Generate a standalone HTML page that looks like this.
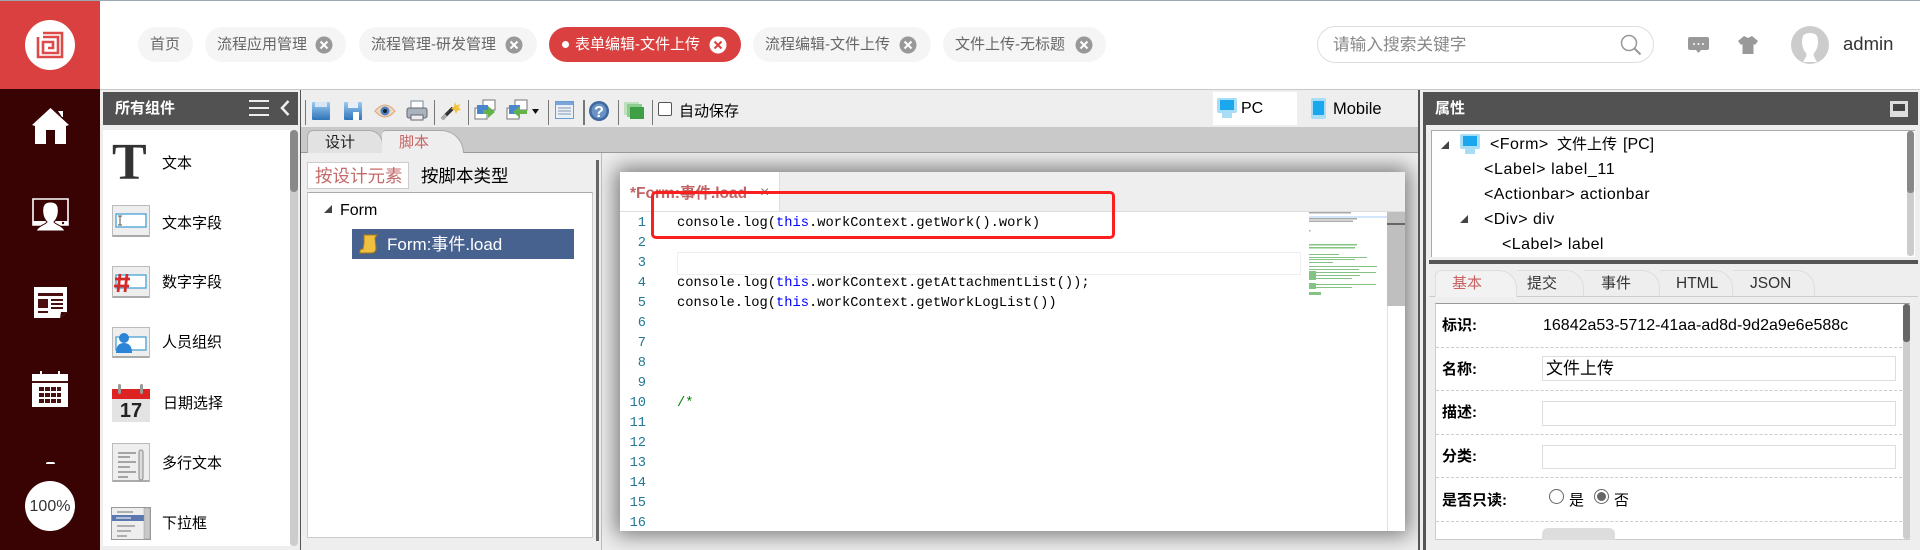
<!DOCTYPE html>
<html><head><meta charset="utf-8">
<style>
*{box-sizing:border-box}
html,body{margin:0;padding:0;width:1920px;height:550px;overflow:hidden;background:#fff}
body{position:relative;font-family:"Liberation Sans","Noto Sans CJK SC",sans-serif;color:#000}
.a{position:absolute}
.t{position:absolute;white-space:nowrap;line-height:20px;height:20px}
.tab{position:absolute;top:27px;height:35px;border-radius:18px;background:#f5f5f5}
.tt{color:#666;font-size:15px}
.c{font-family:"Liberation Mono",monospace;font-size:13.75px;letter-spacing:0}
.n{position:absolute;left:625px;width:21px;text-align:right;font-family:"Liberation Mono",monospace;font-size:13.7px;color:#237893;line-height:20px}
.k{color:#0000ff}
.l{font-size:15px}
svg{position:absolute;overflow:visible}
.ds{position:absolute;left:1436px;width:466px;border-top:1px dashed #ccc;height:0}
.in{position:absolute;left:1542px;width:354px;border:1px solid #ddd;background:#fff}
.pt{position:absolute;top:270px;height:26px;border:1px solid #ddd;border-bottom:none;border-left:none;border-radius:0 18px 0 0;background:#eee}
.sep{position:absolute;top:100px;height:25px;width:1px;background:#777}
.tr{font-size:16px;letter-spacing:.45px}
</style></head><body>

<div class="a" style="left:0;top:0;width:1920px;height:1px;background:#9aabb0"></div>
<div class="a" style="left:100px;top:89px;width:1820px;height:1px;background:#c8c8c8"></div>
<div class="a" style="left:100px;top:90px;width:1820px;height:460px;background:#eee"></div>

<!-- logo -->
<div class="a" style="left:0;top:1px;width:100px;height:88px;background:#db4040"></div>
<div class="a" style="left:25px;top:20px;width:50px;height:50px;border-radius:50%;background:#fff"></div>
<svg style="left:35px;top:31px" width="30" height="28" viewBox="0 0 30 28" fill="none" stroke="#dd4a4a" stroke-width="2.600">
<path d="M3 6V26H27V2H8"/><path d="M8 6H23V22H8V11H18V17H13"/></svg>

<!-- sidebar -->
<div class="a" style="left:0;top:89px;width:100px;height:461px;background:#3a0303"></div>
<svg style="left:32px;top:108px" width="37" height="36" viewBox="0 0 37 36" fill="#fff"><path d="M18.500 0 37 17 34 18V36H23V22H14V36H3V18L0 17Z"/><path d="M26 3h5v6h-1z"/></svg>
<svg style="left:32px;top:198px" width="37" height="33" viewBox="0 0 37 33"><path d="M1 1H36V27H1Z" fill="#3a0303" stroke="#fff" stroke-width="1.600"/><path d="M1 23H36V27H1Z" fill="#fff"/><path d="M4 33C7 27 13 27 15 24 11 20 10 14 11 9 12 5 15 4 18.500 4 22 4 25 5 26 9 27 14 26 20 22 24 24 27 30 27 33 33Z" fill="#fff" stroke="#3a0303" stroke-width="1"/><circle cx="31" cy="25" r="1.200" fill="#3a0303"/></svg>
<svg style="left:34px;top:286px" width="33" height="32" viewBox="0 0 33 32"><path d="M0 1H33V26L26 32H0Z" fill="#fff"/><path d="M4 7H29V10H4ZM4 13H14V22H4ZM17 13H29V15H17ZM17 17H29V19H17ZM17 21H29V23H17ZM4 25H14V27H4Z" fill="#4a1010"/><path d="M26 32 27 26H33Z" fill="#3a0303"/></svg>
<svg style="left:32px;top:371px" width="36" height="36" viewBox="0 0 36 36"><path d="M0 3H36V36H0Z" fill="#fff"/><path d="M8 0h2v8H8zM26 0h2v8h-2z" fill="#fff"/><path d="M0 10H36V12H0Z" fill="#4a1010"/><path d="M7 16h5v4H7zM13 16h5v4h-5zM19 16h5v4h-5zM25 16h4v4h-4zM7 22h5v4H7zM13 22h5v4h-5zM19 22h5v4h-5zM25 22h4v4h-4zM7 28h5v4H7zM13 28h5v4h-5zM19 28h5v4h-5zM25 28h4v4h-4z" fill="#4a1010"/></svg>
<div class="a" style="left:46px;top:462px;width:9px;height:2px;background:#fff;border-radius:2px 2px 0 0"></div>
<div class="a" style="left:25px;top:481px;width:50px;height:50px;border-radius:50%;background:#fff"></div>
<div class="t" style="left:25px;width:50px;text-align:center;top:497px;font-size:16px;color:#333">100%</div>

<!-- top tabs -->
<div class="tab" style="left:138px;width:55px"></div><div class="t tt" style="left:150px;top:35px">首页</div>
<div class="tab" style="left:205px;width:141px"></div><div class="t tt" style="left:217px;top:35px">流程应用管理</div>
<div class="tab" style="left:359px;width:178px"></div><div class="t tt" style="left:371px;top:35px">流程管理-研发管理</div>
<div class="tab" style="left:549px;width:192px;background:#db4040"></div><div class="a" style="left:562px;top:41px;width:7px;height:7px;border-radius:50%;background:#fff"></div><div class="t tt" style="left:575px;top:35px;color:#fff">表单编辑-文件上传</div>
<div class="tab" style="left:753px;width:178px"></div><div class="t tt" style="left:765px;top:35px">流程编辑-文件上传</div>
<div class="tab" style="left:943px;width:163px"></div><div class="t tt" style="left:955px;top:35px">文件上传-无标题</div>
<svg style="left:0;top:0" width="1200" height="80" fill="none">
<g stroke="#fff" stroke-width="2"><circle cx="324" cy="45" r="8.500" fill="#999" stroke="none"/><path d="M320.500 41.500l7 7m0-7l-7 7"/>
<circle cx="514" cy="45" r="8.500" fill="#999" stroke="none"/><path d="M510.500 41.500l7 7m0-7l-7 7"/>
<circle cx="908" cy="45" r="8.500" fill="#999" stroke="none"/><path d="M904.500 41.500l7 7m0-7l-7 7"/>
<circle cx="1084" cy="45" r="8.500" fill="#999" stroke="none"/><path d="M1080.500 41.500l7 7m0-7l-7 7"/></g>
<circle cx="718" cy="45" r="8.500" fill="#fff"/><path d="M714.500 41.500l7 7m0-7l-7 7" stroke="#db4040" stroke-width="2"/>
</svg>

<!-- search -->
<div class="a" style="left:1317px;top:26px;width:337px;height:37px;border:1px solid #ddd;border-radius:19px;background:#fff"></div>
<div class="t" style="left:1333px;top:35px;font-size:16.700px;color:#888">请输入搜索关键字</div>
<svg style="left:1620px;top:34px" width="22" height="22" fill="none" stroke="#999" stroke-width="1.500"><circle cx="9" cy="9" r="7.500"/><path d="M14.500 14.500l6 6" stroke-width="2"/></svg>
<svg style="left:1688px;top:37px" width="21" height="17" viewBox="0 0 21 17"><path d="M2 0H19Q21 0 21 2V11Q21 13 19 13H13L10.500 16 8 13H2Q0 13 0 11V2Q0 0 2 0Z" fill="#999"/><circle cx="6" cy="7" r="1" fill="#fff"/><circle cx="10.500" cy="7" r="1" fill="#fff"/><circle cx="15" cy="7" r="1" fill="#fff"/></svg>
<svg style="left:1738px;top:36px" width="20" height="18" viewBox="0 0 20 18"><path d="M6 0 10 2 14 0 20 5 17 9 15.500 8V18H4.500V8L3 9 0 5Z" fill="#999"/></svg>
<div class="a" style="left:1791px;top:26px;width:38px;height:38px;border-radius:50%;background:#ccc;overflow:hidden"></div>
<svg style="left:1791px;top:26px" width="38" height="38" viewBox="0 0 38 38"><path d="M12 36C15 31 16 29 15 27 11 23 10 15 12 10 14 6 24 6 26 10 28 15 27 23 23 27 22 29 23 31 26 36Z" fill="#fff"/></svg>
<div class="t" style="left:1843px;top:34px;font-size:18.500px;color:#333">admin</div>

<!-- left component panel -->
<div class="a" style="left:103px;top:92px;width:195px;height:33px;background:#525252"></div>
<div class="t" style="left:115px;top:99px;font-size:15px;font-weight:bold;color:#fff">所有组件</div>
<div class="a" style="left:249px;top:100px;width:20px;height:16px;border-top:2px solid #eee;border-bottom:2px solid #eee"></div>
<div class="a" style="left:249px;top:107px;width:20px;height:2px;background:#eee"></div>
<svg style="left:280px;top:100px" width="10" height="16" fill="none" stroke="#eee" stroke-width="2.500"><path d="M8.500 1 2 8 8.500 15"/></svg>
<div class="a" style="left:103px;top:130px;width:187px;height:416px;background:#fff"></div>
<div class="a" style="left:290px;top:130px;width:8px;height:416px;background:#ccc;border-radius:4px"></div>
<div class="a" style="left:290px;top:130px;width:8px;height:62px;background:#888;border-radius:4px"></div>
<div class="a" style="left:300px;top:90px;width:1px;height:460px;background:#555"></div>

<div class="t" style="left:112px;top:137px;font-family:'Liberation Serif',serif;font-weight:bold;font-size:52px;line-height:52px;height:52px;color:#333">T</div>
<div class="t l" style="left:162px;top:154px">文本</div>
<svg style="left:112px;top:205px" width="38" height="33" viewBox="0 0 38 33"><rect x=".5" y=".5" width="37" height="31" fill="#eee" stroke="#bbb"/><rect x="1" y="30" width="36" height="2" fill="#aaa"/><rect x="4" y="9" width="30" height="13" fill="#fff" stroke="#47a0d4" stroke-width="1.300"/><path d="M6 11h4M8 11v9M6 20h4" stroke="#555" fill="none"/></svg>
<div class="t l" style="left:162px;top:214px">文本字段</div>
<svg style="left:112px;top:266px" width="38" height="33" viewBox="0 0 38 33"><rect x=".5" y=".5" width="37" height="31" fill="#eee" stroke="#bbb"/><rect x="1" y="30" width="36" height="2" fill="#aaa"/><rect x="4" y="9" width="30" height="13" fill="#fff" stroke="#47a0d4" stroke-width="1.300"/><path d="M8 8 6 26M15 8 13 26M3 13H18M2 20H17" stroke="#d42a2a" stroke-width="2.800" fill="none"/></svg>
<div class="t l" style="left:162px;top:273px">数字字段</div>
<svg style="left:112px;top:327px" width="38" height="32" viewBox="0 0 38 32"><rect x=".5" y=".5" width="37" height="30" fill="#eee" stroke="#bbb"/><rect x="1" y="29" width="36" height="2" fill="#aaa"/><rect x="4" y="10" width="30" height="13" fill="#fff" stroke="#47a0d4" stroke-width="1.300"/><circle cx="12" cy="11" r="5" fill="#2b84d6"/><path d="M4 26Q4 16 12 16T20 26Z" fill="#2b84d6"/></svg>
<div class="t l" style="left:162px;top:333px">人员组织</div>
<svg style="left:112px;top:384px" width="38" height="38" viewBox="0 0 38 38"><rect x="0" y="5" width="38" height="33" fill="#e3e3e3"/><rect x="0" y="5" width="38" height="10" fill="#dd2222"/><rect x="6" y="0" width="3" height="10" rx="1.500" fill="#999"/><rect x="28" y="0" width="3" height="10" rx="1.500" fill="#999"/><text x="19" y="33" text-anchor="middle" font-family="Liberation Sans" font-weight="bold" font-size="20" fill="#222">17</text></svg>
<div class="t l" style="left:163px;top:394px">日期选择</div>
<svg style="left:112px;top:443px" width="38" height="40" viewBox="0 0 38 40"><rect x=".5" y=".5" width="37" height="38" fill="#eee" stroke="#bbb"/><rect x="1" y="37" width="36" height="2" fill="#aaa"/><path d="M6 10H24M6 14H18M6 19H24M6 24H18M6 29H24M6 34H16" stroke="#777" stroke-width="1.300"/><rect x="27" y="7" width="4" height="30" rx="2" fill="#ddd" stroke="#888"/></svg>
<div class="t l" style="left:162px;top:454px">多行文本</div>
<svg style="left:111px;top:507px" width="40" height="33" viewBox="0 0 40 33"><rect x=".5" y=".5" width="39" height="32" fill="#eee" stroke="#999"/><rect x="1" y="8" width="32" height="6" fill="#5b78b0"/><path d="M6 5H22M5 11H20M6 19H24M6 24H20M6 29H16" stroke="#888" stroke-width="1.200"/><path d="M5 11H20" stroke="#fff"/><rect x="33" y="1" width="6" height="31" fill="#c8c8c8" stroke="#999" stroke-width=".5"/></svg>
<div class="t l" style="left:162px;top:514px">下拉框</div>

<!-- toolbar -->
<svg style="left:312px;top:102px" width="18" height="18"><defs><linearGradient id="b" x1="0" y1="0" x2="0" y2="1"><stop offset="0" stop-color="#9ccbf0"/><stop offset="1" stop-color="#2f74b8"/></linearGradient></defs><rect width="18" height="18" rx="1" fill="url(#b)"/><rect x="3" y="0" width="12" height="5" fill="#d6e6f5"/></svg>
<svg style="left:344px;top:102px" width="18" height="18"><rect width="18" height="18" rx="1" fill="url(#b)"/><rect x="4" y="0" width="10" height="6" fill="#e8eef5"/><rect x="9" y="10" width="6" height="8" fill="#fff"/></svg>
<svg style="left:375px;top:104px" width="20" height="14"><path d="M0 7Q10-5 20 7 10 19 0 7Z" fill="#f1d7bd" stroke="#d9a680"/><circle cx="10" cy="7" r="4.500" fill="#4a7fc2"/><circle cx="10" cy="7" r="2" fill="#123"/></svg>
<svg style="left:407px;top:101px" width="20" height="20"><rect x="4" y="0" width="12" height="9" fill="#fff" stroke="#7a8aa0"/><rect x="0" y="7" width="20" height="10" rx="2" fill="#aab2bb" stroke="#667"/><rect x="4" y="14" width="12" height="5" fill="#eee" stroke="#667"/></svg>
<svg style="left:441px;top:101px" width="20" height="20"><path d="M1 18 12 7" stroke="#333" stroke-width="3.500"/><path d="M1 18 5 14" stroke="#aaa" stroke-width="3.500"/><path d="M14 1l1.500 3.500L19 3l-1.500 3.500L20 9l-3.500.5L15 13l-1.500-4L10 8l3-2.500Z" fill="#f2c23a"/></svg>
<svg style="left:475px;top:100px" width="20" height="21"><rect x="8" y="0" width="12" height="10" fill="#fff" stroke="#777"/><rect x="0" y="8" width="12" height="11" fill="#fff" stroke="#777"/><rect x="2" y="5" width="11" height="9" fill="#4a86d0"/><path d="M8 10h5V6l7 6-7 6v-4H8Z" fill="#63b24a"/></svg>
<svg style="left:507px;top:100px" width="20" height="21"><rect x="8" y="0" width="12" height="10" fill="#fff" stroke="#777"/><rect x="0" y="8" width="12" height="11" fill="#fff" stroke="#777"/><rect x="2" y="5" width="11" height="9" fill="#4a86d0"/><path d="M20 10h-7V6l-7 6 7 6v-4h7Z" fill="#63b24a"/></svg>
<svg style="left:532px;top:109px" width="7" height="5"><path d="M0 0H7L3.500 5Z" fill="#111"/></svg>
<svg style="left:555px;top:101px" width="19" height="18"><rect x=".5" y=".5" width="18" height="17" fill="#e8f0fa" stroke="#6d9ad0"/><rect x="1" y="1" width="17" height="3" fill="#7aa5da"/><path d="M3 7H16M3 10H16M3 13H16" stroke="#8a98aa"/></svg>
<svg style="left:589px;top:101px" width="20" height="20"><circle cx="10" cy="10" r="10" fill="#3f68a0"/><circle cx="10" cy="10" r="7.500" fill="#6a92c4"/><text x="10" y="16" text-anchor="middle" font-family="Liberation Sans" font-weight="bold" font-size="16" fill="#fff">?</text></svg>
<svg style="left:624px;top:102px" width="20" height="18"><rect x="0" y="0" width="15" height="13" fill="#bfe0bf"/><rect x="3" y="2" width="15" height="13" fill="#8fcc8f"/><rect x="6" y="5" width="14" height="12" fill="#3f9f47"/></svg>
<div class="sep" style="left:305px"></div><div class="sep" style="left:434px"></div><div class="sep" style="left:468px"></div><div class="sep" style="left:548px"></div><div class="sep" style="left:583px;width:2px"></div><div class="sep" style="left:618px"></div><div class="sep" style="left:652px"></div>
<div class="a" style="left:658px;top:102px;width:14px;height:14px;border:1px solid #555;border-radius:2px;background:#fff"></div>
<div class="t" style="left:679px;top:102px;font-size:15px">自动保存</div>
<div class="a" style="left:1213px;top:92px;width:84px;height:33px;background:#fff"></div>
<svg style="left:1217px;top:98px" width="20" height="20"><rect x="0" y="0" width="20" height="15" rx="2" fill="#a8def5"/><rect x="3" y="2" width="14" height="10" fill="#1aa7ee"/><rect x="5" y="15" width="10" height="5" fill="#a8def5"/></svg>
<div class="t" style="left:1241px;top:99px;font-size:16px">PC</div>
<svg style="left:1311px;top:98px" width="15" height="21"><rect width="15" height="21" rx="2" fill="#a8def5"/><rect x="2" y="3" width="11" height="14" fill="#1aa7ee"/></svg>
<div class="t" style="left:1333px;top:99px;font-size:16.500px">Mobile</div>

<!-- form tabs -->
<div class="a" style="left:301px;top:127px;width:1117px;height:26px;background:#c9c9c9"></div>
<div class="a" style="left:301px;top:152px;width:1117px;height:1px;background:#999"></div>
<div class="a" style="left:307px;top:130px;width:76px;height:23px;background:#e2e2e2;border:1px solid #aaa;border-bottom:none;border-radius:6px 14px 0 0"></div>
<div class="a" style="left:382px;top:130px;width:82px;height:23px;background:#eee;border:1px solid #aaa;border-bottom:none;border-left:none;border-radius:4px 24px 0 0"></div>
<div class="t" style="left:325px;top:133px;font-size:15px;color:#222">设计</div>
<div class="t" style="left:399px;top:133px;font-size:15px;color:#c86464">脚本</div>

<!-- tree -->
<div class="a" style="left:307px;top:162px;width:102px;height:27px;background:#fff;border:1px solid #ccc"></div>
<div class="t" style="left:315px;top:166px;font-size:17.500px;color:#c46a6a">按设计元素</div>
<div class="t" style="left:421px;top:166px;font-size:17.500px">按脚本类型</div>
<div class="a" style="left:307px;top:192px;width:286px;height:346px;background:#fff;border:1px solid #ccc;border-top-color:#aaa"></div>
<svg style="left:324px;top:205px" width="8" height="8"><path d="M0 8H8V0Z" fill="#444"/></svg>
<div class="t" style="left:340px;top:201px;font-size:16px">Form</div>
<div class="a" style="left:352px;top:229px;width:222px;height:30px;background:#486290"></div>
<svg style="left:359px;top:234px" width="20" height="20"><path d="M5 1H18L16 4 17 14Q17 19 12 19H1Q0 15 4 15L5 9Z" fill="#f0c040" stroke="#a87a10" stroke-width="1"/></svg>
<div class="t" style="left:387px;top:235px;font-size:17px;color:#fff">Form:事件.load</div>
<div class="a" style="left:596px;top:160px;width:3px;height:381px;background:#666"></div>
<div class="a" style="left:601px;top:153px;width:1px;height:397px;background:#bbb"></div>

<!-- editor -->
<div class="a" style="left:602px;top:153px;width:816px;height:397px;overflow:hidden">
  <div class="a" style="left:18px;top:19px;width:785px;height:359px;box-shadow:0 0 20px 4px rgba(0,0,0,.5)"></div>
</div>
<div class="a" style="left:620px;top:172px;width:785px;height:359px;background:#fff"></div>
<div class="a" style="left:620px;top:172px;width:785px;height:40px;background:#eee;border-bottom:1px solid #ddd"></div>
<div class="a" style="left:620px;top:172px;width:160px;height:40px;background:#fff;border-right:1px solid #ddd;border-bottom:1px solid #ddd"></div>
<div class="t" style="left:630px;top:184px;font-size:15.500px;font-weight:bold;color:#c06464">*Form:事件.load</div>
<div class="t" style="left:760px;top:183px;font-size:16px;color:#777">×</div>

<div class="n" style="top:214px">1</div><div class="n" style="top:234px">2</div><div class="n" style="top:254px">3</div><div class="n" style="top:274px">4</div><div class="n" style="top:294px">5</div><div class="n" style="top:314px">6</div><div class="n" style="top:334px">7</div><div class="n" style="top:354px">8</div><div class="n" style="top:374px">9</div><div class="n" style="top:394px">10</div><div class="n" style="top:414px">11</div><div class="n" style="top:434px">12</div><div class="n" style="top:454px">13</div><div class="n" style="top:474px">14</div><div class="n" style="top:494px">15</div><div class="n" style="top:514px">16</div>

<div class="a" style="left:677px;top:252px;width:624px;height:23px;border:1px solid #eee"></div>
<div class="t c" style="left:677px;top:214px">console.log(<span class="k">this</span>.workContext.getWork().work)</div>
<div class="t c" style="left:677px;top:274px">console.log(<span class="k">this</span>.workContext.getAttachmentList());</div>
<div class="t c" style="left:677px;top:294px">console.log(<span class="k">this</span>.workContext.getWorkLogList())</div>
<div class="t c" style="left:677px;top:394px;color:#008000">/*</div>

<!-- minimap -->
<svg style="left:1309px;top:212px" width="80" height="90">
<rect x="0" y="4" width="78" height="2" fill="#d6e6fa"/>
<g fill="#aaa"><rect x="0" y="0" width="42" height="1.500"/><rect x="0" y="6" width="48" height="1.500"/><rect x="0" y="8.500" width="44" height="1.500"/></g>
<g fill="#67b567" opacity=".8"><rect x="0" y="18" width="1.500" height="1.500"/><rect x="0" y="32" width="48" height="1.500"/><rect x="0" y="35" width="46" height="1.500"/><rect x="0" y="42" width="30" height="1"/><rect x="0" y="45" width="58" height="1"/><rect x="0" y="47" width="46" height="1"/><rect x="0" y="50" width="24" height="1"/><rect x="0" y="54" width="68" height="1"/><rect x="0" y="57" width="50" height="1"/><rect x="0" y="59" width="7" height="9"/><rect x="7" y="60" width="60" height="1"/><rect x="7" y="63" width="44" height="1"/><rect x="7" y="66" width="36" height="1"/><rect x="0" y="71" width="7" height="6"/><rect x="7" y="72" width="60" height="1"/><rect x="7" y="75" width="36" height="1"/><rect x="0" y="80" width="12" height="3"/></g>
</svg>
<div class="a" style="left:1387px;top:212px;width:18px;height:94px;background:#bfbfbf"></div>
<div class="a" style="left:1387px;top:223px;width:18px;height:2px;background:#666"></div>
<div class="a" style="left:1387px;top:306px;width:1px;height:225px;background:#e2e2e2"></div>

<!-- red highlight rect -->
<div class="a" style="left:651px;top:191px;width:464px;height:48px;border:3px solid #fb2020;border-radius:5px"></div>

<!-- right panel -->
<div class="a" style="left:1418px;top:90px;width:2px;height:460px;background:#555"></div>
<div class="a" style="left:1423px;top:92px;width:495px;height:33px;background:#525252"></div>
<div class="t" style="left:1435px;top:99px;font-size:15px;font-weight:bold;color:#fff">属性</div>
<svg style="left:1890px;top:101px" width="18" height="16"><rect width="18" height="16" fill="#ddd"/><rect x="3" y="3" width="12" height="7" fill="#444"/></svg>
<div class="a" style="left:1423px;top:125px;width:3px;height:425px;background:#555"></div>
<div class="a" style="left:1431px;top:130px;width:484px;height:127px;background:#fff;border:1px solid #aaa;border-bottom:none;border-right:none"></div>
<div class="a" style="left:1907px;top:131px;width:7px;height:125px;background:#ccc;border-radius:3px"></div>
<div class="a" style="left:1907px;top:131px;width:7px;height:62px;background:#888;border-radius:3px"></div>
<svg style="left:1441px;top:141px" width="8" height="8"><path d="M0 8H8V0Z" fill="#444"/></svg>
<svg style="left:1460px;top:134px" width="20" height="20"><rect x="0" y="0" width="20" height="15" rx="2" fill="#a8def5"/><rect x="3" y="2" width="14" height="10" fill="#1aa7ee"/><rect x="5" y="15" width="10" height="5" fill="#a8def5"/></svg>
<div class="t tr" style="left:1490px;top:135px">&lt;Form&gt;</div>
<div class="t" style="left:1557px;top:135px;font-size:15px">文件上传</div>
<div class="t" style="left:1623px;top:135px;font-size:16px">[PC]</div>
<div class="t tr" style="left:1484px;top:160px;letter-spacing:.6px">&lt;Label&gt; label_11</div>
<div class="t tr" style="left:1484px;top:185px">&lt;Actionbar&gt; actionbar</div>
<svg style="left:1460px;top:215px" width="8" height="8"><path d="M0 8H8V0Z" fill="#444"/></svg>
<div class="t tr" style="left:1484px;top:210px">&lt;Div&gt; div</div>
<div class="t tr" style="left:1502px;top:235px">&lt;Label&gt; label</div>
<div class="a" style="left:1429px;top:260px;width:489px;height:4px;background:#555"></div>

<!-- prop tabs -->
<div class="a" style="left:1429px;top:296px;width:489px;height:1px;background:#ccc"></div>
<div class="pt" style="left:1584px;width:76px"></div><div class="pt" style="left:1660px;width:73px"></div><div class="pt" style="left:1733px;width:82px"></div><div class="pt" style="left:1517px;width:67px"></div>
<div class="pt" style="left:1435px;width:82px;height:27px;background:#f2f2f2;border-left:1px solid #ddd;border-radius:6px 18px 0 0"></div>
<div class="t" style="left:1452px;top:274px;font-size:15px;color:#c86464">基本</div>
<div class="t" style="left:1527px;top:274px;font-size:15px;color:#333">提交</div>
<div class="t" style="left:1601px;top:274px;font-size:15px;color:#333">事件</div>
<div class="t" style="left:1676px;top:274px;font-size:15.500px;color:#333">HTML</div>
<div class="t" style="left:1750px;top:274px;font-size:15.500px;color:#333">JSON</div>

<!-- props -->
<div class="a" style="left:1435px;top:303px;width:475px;height:237px;background:#fff;border:1px solid #ccc;border-top-color:#999"></div>
<div class="a" style="left:1903px;top:304px;width:7px;height:235px;background:#ccc;border-radius:3px"></div>
<div class="a" style="left:1903px;top:304px;width:7px;height:38px;background:#666;border-radius:3px"></div>
<div class="ds" style="top:347px"></div><div class="ds" style="top:390px"></div><div class="ds" style="top:434px"></div><div class="ds" style="top:477px"></div><div class="ds" style="top:521px"></div>
<div class="t" style="left:1442px;top:316px;font-size:15px;font-weight:bold">标识:</div>
<div class="t" style="left:1543px;top:316px;font-size:16px">16842a53-5712-41aa-ad8d-9d2a9e6e588c</div>
<div class="t" style="left:1442px;top:360px;font-size:15px;font-weight:bold">名称:</div>
<div class="in" style="top:356px;height:25px"></div>
<div class="t" style="left:1546px;top:359px;font-size:17px">文件上传</div>
<div class="t" style="left:1442px;top:403px;font-size:15px;font-weight:bold">描述:</div>
<div class="in" style="top:401px;height:25px"></div>
<div class="t" style="left:1442px;top:447px;font-size:15px;font-weight:bold">分类:</div>
<div class="in" style="top:445px;height:24px"></div>
<div class="t" style="left:1442px;top:491px;font-size:15px;font-weight:bold">是否只读:</div>
<svg style="left:1549px;top:489px" width="60" height="16" fill="#fff" stroke="#666"><circle cx="7.500" cy="7.500" r="7"/><circle cx="52.500" cy="7.500" r="7"/><circle cx="52.500" cy="7.500" r="4.500" fill="#666" stroke="none"/></svg>
<div class="t" style="left:1569px;top:491px;font-size:15px">是</div>
<div class="t" style="left:1614px;top:491px;font-size:15px">否</div>
<div class="a" style="left:1542px;top:528px;width:73px;height:12px;background:#ddd;border-radius:6px 6px 0 0"></div>

</body></html>
